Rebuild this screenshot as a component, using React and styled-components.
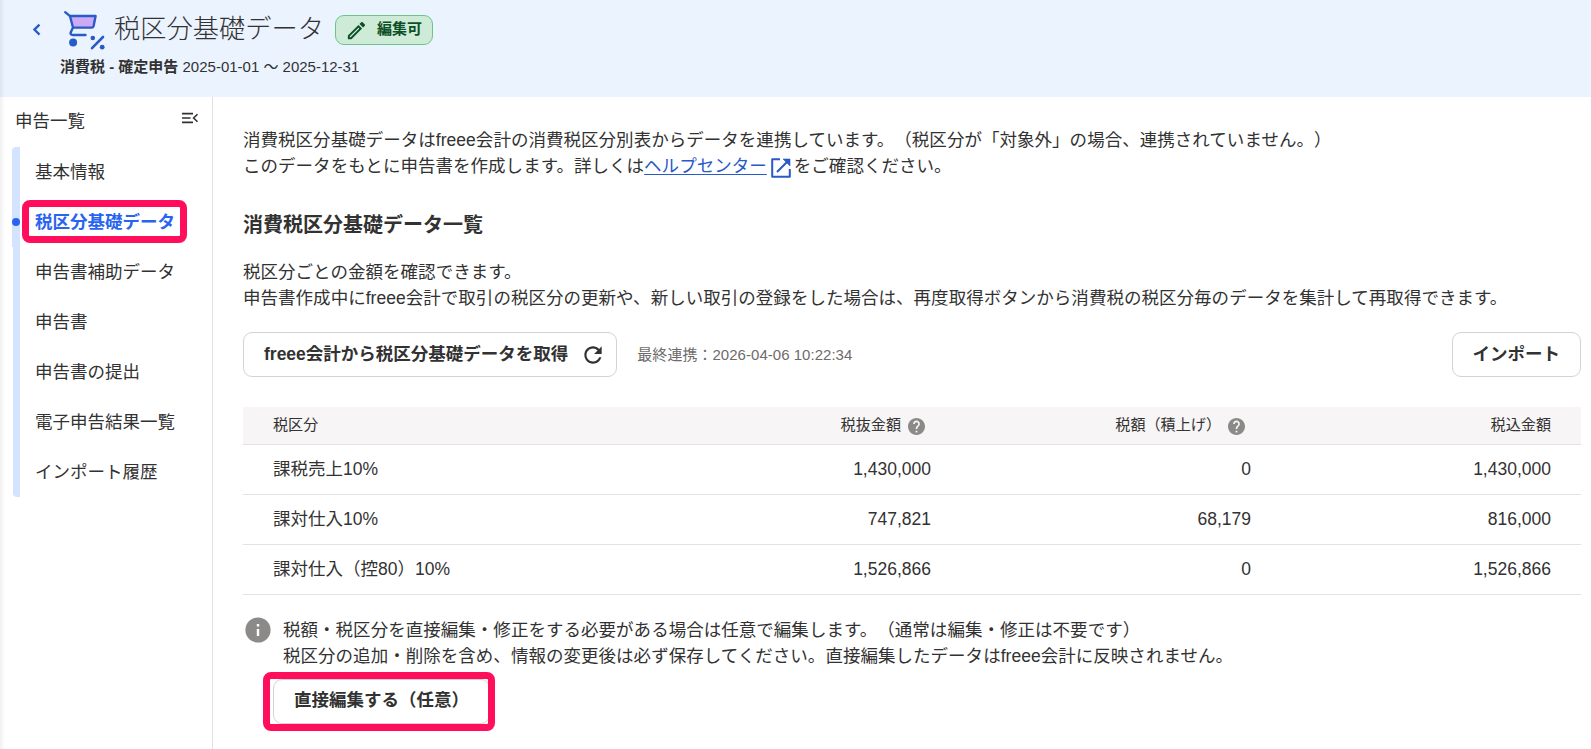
import React from "react";
import styled, { createGlobalStyle } from "styled-components";

const GlobalStyle = createGlobalStyle`
  * { box-sizing: border-box; }
  body {
    margin: 0;
    background: #fff;
    color: #323232;
    font-family: "Liberation Sans", "Noto Sans CJK JP", sans-serif;
    font-size: 17.5px;
    line-height: 26.25px;
    text-spacing-trim: space-all;
    overflow: hidden;
  }
`;

const Page = styled.div`
  position: relative;
  display: flex;
  flex-direction: column;
  height: 749px;
  overflow: hidden;
`;

const EdgeShadow = styled.div`
  position: absolute;
  inset: 0 auto 0 0;
  width: 5px;
  background: linear-gradient(to right, rgba(0, 0, 0, 0.06), rgba(0, 0, 0, 0));
`;

const Header = styled.header`
  height: 97px;
  flex: none;
  padding: 9px 0 0 31px;
  background: #ebf3ff;
`;

const TitleRow = styled.div`
  display: flex;
  align-items: center;
  height: 42px;
`;

const BackButton = styled.a`
  display: flex;
  width: 33px;
`;

const CartLogo = styled.svg`
  flex: none;
  width: 42px;
  height: 42px;
  margin-right: 8px;
`;

const Title = styled.h1`
  margin: 0;
  padding-bottom: 2px;
  font-size: 26.25px;
  line-height: 40px;
  font-weight: 300;
`;

const StatusBadge = styled.span`
  display: flex;
  align-items: center;
  gap: 9px;
  width: 98px;
  height: 30px;
  margin-left: 11px;
  padding-left: 9px;
  border: 1px solid #6cc48b;
  border-radius: 9px;
  background: #cdebd7;
  color: #0d4f26;
  font-size: 15px;
  font-weight: 700;
  line-height: 26px;
`;

const StatusLabel = styled.span`
  padding-bottom: 3px;
`;

const Subtitle = styled.div`
  padding: 4px 0 0 29px;
  font-size: 15px;
  line-height: 23px;
`;

const Body = styled.div`
  display: flex;
  flex: 1;
`;

const Sidebar = styled.nav`
  flex: none;
  width: 213px;
  border-right: 1px solid #e1dfe0;
`;

const SidebarHead = styled.div`
  display: flex;
  justify-content: space-between;
  height: 50px;
  padding: 11px 13px 0 15px;
`;

const CollapseIcon = styled.svg`
  width: 18px;
  height: 14px;
  margin-top: 3px;
`;

const Steps = styled.ul`
  list-style: none;
  margin: 0 0 0 12px;
  padding: 0;
`;

const Step = styled.li`
  position: relative;
  height: 50px;
  margin-left: ${(p) => (p.$done ? 0 : 1)}px;
  padding: 12px 0 0 15px;
  border-left: ${(p) => (p.$done ? 8 : 7)}px solid #d4e3ff;
  color: ${(p) => (p.$active ? "#2864f0" : "#323232")};
  font-weight: ${(p) => (p.$active ? 700 : 400)};
  &:first-child { border-top-left-radius: 4px; }
  &:last-child { border-bottom-left-radius: 4px; }
`;

const Dot = styled.span`
  position: absolute;
  left: -8px;
  top: 21px;
  width: 8px;
  height: 8px;
  border-radius: 50%;
  background: #2864f0;
`;

const Highlight = styled.span`
  position: absolute;
  left: ${(p) => p.$left}px;
  top: ${(p) => p.$top}px;
  width: ${(p) => p.$w}px;
  height: ${(p) => p.$h}px;
  border: 7px solid #ff0f5b;
  border-radius: 8px;
  pointer-events: none;
`;

const Main = styled.main`
  flex: 1;
  padding: 30px 10px 0 30px;
`;

const Paragraph = styled.p`
  margin: 0;
  letter-spacing: 0.03px;
  white-space: nowrap;
`;

const HelpLink = styled.a`
  color: #285ac8;
  text-decoration: underline;
  text-underline-offset: 2px;
  text-decoration-thickness: 1px;
`;

const ExternalIcon = styled.svg`
  width: 20px;
  height: 20px;
  margin: 0 3px 0 4px;
  vertical-align: -6px;
`;

const SectionTitle = styled.h2`
  margin: 30px 0 19.5px;
  font-size: 20px;
  line-height: 30px;
  font-weight: 700;
`;

const Toolbar = styled.div`
  display: flex;
  align-items: center;
  margin-top: 20.5px;
`;

const Button = styled.button`
  display: flex;
  align-items: center;
  height: 45px;
  padding: 0 20px 2px;
  border: 1px solid #d7d2d2;
  border-radius: 9px;
  background: #fff;
  color: #323232;
  font: 700 17.5px/26px "Liberation Sans", "Noto Sans CJK JP", sans-serif;
  text-spacing-trim: space-all;
  white-space: nowrap;
`;

const RefreshIcon = styled.svg`
  width: 26px;
  height: 26px;
  margin: 2px -10px 0 12px;
`;

const SyncedAt = styled.span`
  flex: 1;
  margin-left: 20px;
  color: #6e6b6b;
  font-size: 15px;
  line-height: 23px;
  letter-spacing: 0.03px;
`;

const Table = styled.div`
  margin-top: 30px;
`;

const Row = styled.div`
  display: grid;
  grid-template-columns: 398px 320px 320px 300px;
  align-items: center;
  height: ${(p) => (p.$head ? 38 : 50)}px;
  padding-bottom: ${(p) => (p.$head ? 0 : 1)}px;
  border-bottom: 1px solid #e4e2e2;
  background: ${(p) => (p.$head ? "#f7f5f6" : "#fff")};
  font-size: ${(p) => (p.$head ? 15.1 : 17.5)}px;
`;

const Cell = styled.div`
  display: flex;
  align-items: center;
  justify-content: ${(p) => (p.$left ? "flex-start" : "flex-end")};
  padding: 0 30px;
  white-space: nowrap;
`;

const HelpIcon = styled.svg`
  width: 17px;
  height: 17px;
  margin: 1px 6px 0 7px;
`;

const Notice = styled.div`
  display: flex;
  margin-top: 22px;
`;

const InfoIcon = styled.svg`
  flex: none;
  width: 26px;
  height: 26px;
  margin: 0 12px 0 2px;
`;

const EditArea = styled.div`
  position: relative;
  width: max-content;
  margin: 9px 0 0 30px;
`;

const steps = [
  { label: "基本情報", done: true },
  { label: "税区分基礎データ", done: true, active: true },
  { label: "申告書補助データ" },
  { label: "申告書" },
  { label: "申告書の提出" },
  { label: "電子申告結果一覧" },
  { label: "インポート履歴" },
];

const rows = [
  ["課税売上10%", "1,430,000", "0", "1,430,000"],
  ["課対仕入10%", "747,821", "68,179", "816,000"],
  ["課対仕入（控80）10%", "1,526,866", "0", "1,526,866"],
];

function Help() {
  return (
    <HelpIcon viewBox="2 2 20 20">
      <path fill="#8c8989" d="M12 2C6.48 2 2 6.48 2 12s4.48 10 10 10 10-4.48 10-10S17.52 2 12 2zm1 17h-2v-2h2v2zm2.07-7.75l-.9.92C13.45 12.9 13 13.5 13 15h-2v-.5c0-1.1.45-2.1 1.17-2.83l1.24-1.26c.37-.36.59-.86.59-1.41 0-1.1-.9-2-2-2s-2 .9-2 2H8c0-2.21 1.79-4 4-4s4 1.79 4 4c0 .88-.36 1.68-.93 2.25z" />
    </HelpIcon>
  );
}

export default function App() {
  return (
    <Page>
      <GlobalStyle />
      <Header>
        <TitleRow>
          <BackButton>
            <svg width="12" height="14" viewBox="0 0 12 14">
              <path d="M8.5 1.6L3.4 6.6l5.1 5" fill="none" stroke="#285ac8" strokeWidth="2.3" />
            </svg>
          </BackButton>
          <CartLogo viewBox="0 0 42 42" fill="none" stroke="#285ac8">
            <path d="M6.6 7H31.6L29.6 18.5H9.3z" fill="#cdaaf5" stroke="none" />
            <path d="M1.2 3.2L6 7.2L9 18.5L7 22.8Q5.6 26 9 26H21.5M6 7H31.6L29.6 17Q29.2 18.6 27.6 18.6H9" strokeWidth="2.4" strokeLinejoin="round" strokeLinecap="round" />
            <circle cx="9.1" cy="33.6" r="4" fill="#285ac8" stroke="none" />
            <path d="M28 39.2L39 28" strokeWidth="2.6" strokeLinecap="round" />
            <circle cx="28.8" cy="29" r="2.3" fill="#285ac8" stroke="none" />
            <circle cx="38.2" cy="38.2" r="2.4" fill="#285ac8" stroke="none" />
          </CartLogo>
          <Title>税区分基礎データ</Title>
          <StatusBadge>
            <svg width="23" height="23" viewBox="0 0 24 24" fill="#0d4f26">
              <path d="M14.06 9.02l.92.92L5.92 19H5v-.92l9.06-9.06M17.66 3c-.25 0-.51.1-.7.29l-1.83 1.83 3.75 3.75 1.83-1.83c.39-.39.39-1.02 0-1.41l-2.34-2.34c-.2-.2-.45-.29-.71-.29zm-3.6 3.19L3 17.25V21h3.75L17.81 9.94l-3.75-3.75z" />
            </svg>
            <StatusLabel>編集可</StatusLabel>
          </StatusBadge>
        </TitleRow>
        <Subtitle>
          <b>消費税 - 確定申告</b> 2025-01-01 ～ 2025-12-31
        </Subtitle>
      </Header>
      <Body>
        <Sidebar>
          <SidebarHead>
            申告一覧
            <CollapseIcon viewBox="0 0 18 14" fill="none" stroke="#323232" strokeWidth="1.6">
              <path d="M1 2.6h11M1 7h8.5M1 11.4h11M16.5 3.2L12.6 7l3.9 3.8" />
            </CollapseIcon>
          </SidebarHead>
          <Steps>
            {steps.map((s) => (
              <Step key={s.label} $done={s.done} $active={s.active}>
                {s.active && <Dot />}
                {s.label}
                {s.active && <Highlight $left={2} $top={3} $w={165} $h={43} />}
              </Step>
            ))}
          </Steps>
        </Sidebar>
        <Main>
          <Paragraph>
            消費税区分基礎データはfreee会計の消費税区分別表からデータを連携しています。（税区分が「対象外」の場合、連携されていません。）
          </Paragraph>
          <Paragraph>
            このデータをもとに申告書を作成します。詳しくは<HelpLink>ヘルプセンター</HelpLink>
            <ExternalIcon viewBox="0 0 20 20" fill="none" stroke="#285ac8" strokeWidth="2" strokeLinejoin="round">
              <path d="M9 1.2H1.2V18.8H18.8V11M6 14L17 3" />
              <path d="M12 1h7v7z" fill="#285ac8" strokeWidth="0.6" />
            </ExternalIcon>
            をご確認ください。
          </Paragraph>
          <SectionTitle>消費税区分基礎データ一覧</SectionTitle>
          <Paragraph>税区分ごとの金額を確認できます。</Paragraph>
          <Paragraph>
            申告書作成中にfreee会計で取引の税区分の更新や、新しい取引の登録をした場合は、再度取得ボタンから消費税の税区分毎のデータを集計して再取得できます。
          </Paragraph>
          <Toolbar>
            <Button>
              freee会計から税区分基礎データを取得
              <RefreshIcon viewBox="0 0 24 24" fill="#323232">
                <path d="M17.65 6.35C16.2 4.9 14.21 4 12 4c-4.42 0-7.99 3.58-7.99 8s3.57 8 7.99 8c3.73 0 6.84-2.55 7.73-6h-2.08c-.82 2.33-3.04 4-5.65 4-3.31 0-6-2.69-6-6s2.69-6 6-6c1.66 0 3.14.69 4.22 1.78L13 11h7V4l-2.35 2.35z" />
              </RefreshIcon>
            </Button>
            <SyncedAt>最終連携：2026-04-06 10:22:34</SyncedAt>
            <Button>インポート</Button>
          </Toolbar>
          <Table>
            <Row $head>
              <Cell $left>税区分</Cell>
              <Cell>税抜金額<Help /></Cell>
              <Cell>税額（積上げ）<Help /></Cell>
              <Cell>税込金額</Cell>
            </Row>
            {rows.map((r) => (
              <Row key={r[0]}>
                {r.map((v, i) => (
                  <Cell key={i} $left={i === 0}>{v}</Cell>
                ))}
              </Row>
            ))}
          </Table>
          <Notice>
            <InfoIcon viewBox="0 0 26 26">
              <circle cx="13" cy="13" r="12.6" fill="#8c8989" />
              <path d="M13 12v7M13 7v2.5" stroke="#fff" strokeWidth="2.4" />
            </InfoIcon>
            <div>
              <Paragraph>税額・税区分を直接編集・修正をする必要がある場合は任意で編集します。（通常は編集・修正は不要です）</Paragraph>
              <Paragraph>税区分の追加・削除を含め、情報の変更後は必ず保存してください。直接編集したデータはfreee会計に反映されません。</Paragraph>
            </div>
          </Notice>
          <EditArea>
            <Button>直接編集する（任意）</Button>
            <Highlight $left={-10} $top={-7} $w={232} $h={59} />
          </EditArea>
        </Main>
      </Body>
      <EdgeShadow />
    </Page>
  );
}
